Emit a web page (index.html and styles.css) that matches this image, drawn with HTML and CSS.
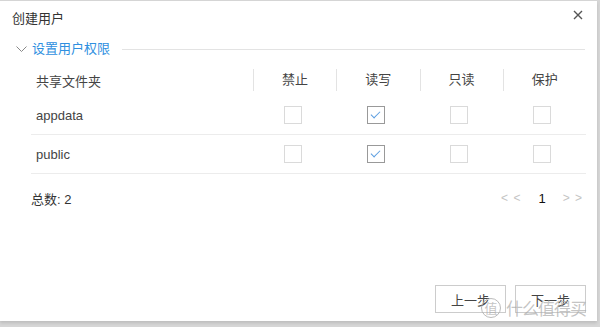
FILE: index.html
```html
<!DOCTYPE html>
<html lang=zh><head>
<meta charset=UTF-8>
<title>创建用户</title><link rel="stylesheet" href="styles.css"></head><body>
<div class=dialog>
<div class=dlg-head><span class=dlg-title>创建用户</span>
<svg class=close width=10 height=10 viewBox="0 0 10 10"><path d="M1 1L9 9M9 1L1 9" stroke="#555" stroke-width="1.4"/></svg></div>
<div class=section>
<svg class=chev width=11 height=6 viewBox="0 0 11 6"><path d="M.5 .5L5.5 5.5L10.5 .5" fill=none stroke="#888" stroke-width="1"/></svg>
<span class=sec-title>设置用户权限</span><span class=sec-line></span></div>
<div class=tbl>
<div class="row head"><div class=c1>共享文件夹</div><div class=c>禁止</div><div class=c>读写</div><div class=c>只读</div><div class=c>保护</div></div>
<div class=row><div class=c1>appdata</div><div class=c><i class=cb></i></div><div class=c><i class="cb on"></i></div><div class=c><i class=cb></i></div><div class=c><i class=cb></i></div></div>
<div class=row><div class=c1>public</div><div class=c><i class=cb></i></div><div class=c><i class="cb on"></i></div><div class=c><i class=cb></i></div><div class=c><i class=cb></i></div></div>
</div>
<div class=foot><span>总数: 2</span><div class=pager><span class=arr>&lt; &lt;</span><span class=pg>1</span><span class=arr>&gt; &gt;</span></div></div>
<div class=btns><button>上一步</button><button>下一步</button></div>
<div class=wm><span class=wm-c>值</span>什么值得买</div>
</div>
</body></html>
```
FILE: styles.css
```css
body{margin:0;background:#d6d6d6;font-family:"Liberation Sans","Noto Sans CJK SC",sans-serif;font-size:13px;color:#333;height:327px;overflow:hidden}
.dialog{position:relative;background:#fff;width:597px;height:320px;margin-top:1px;box-shadow:0 2px 3px rgba(0,0,0,.12)}
.dlg-head{display:flex;justify-content:space-between;align-items:flex-start;padding:11px 14px 0 12px;height:25px}
.dlg-title{font-size:13px;color:#333;line-height:14px}
.close{margin-top:-2px}
.section{display:flex;align-items:center;padding:0 12px 0 16px;height:20px;margin-top:2px}
.chev{margin-right:5px}
.sec-title{color:#2f8fe0;font-size:13px;line-height:14px}
.sec-line{flex:1;height:1px;background:#e3e3e3;margin-left:12px}
.tbl{margin:0 11px 0 31px;padding-top:5px}
.row{display:grid;grid-template-columns:222px repeat(4,1fr);height:38px;align-items:center;border-bottom:1px solid #ececec}
.row.head{height:32px;border:none}
.head .c{border-left:1px solid #e3e3e3;height:22px;line-height:22px;color:#444}
.c1{padding-left:5px;color:#444}
.c{text-align:center;display:flex;justify-content:center;align-items:center}
.cb{display:block;border:1px solid #dadada;box-sizing:border-box;width:18px;height:18px;margin-left:-4px}
.cb.on{border-color:#999;position:relative}
.cb.on::after{content:"";position:absolute;left:5px;top:2px;width:4px;height:8px;border:solid #5c9ee0;border-width:0 1.3px 1.3px 0;transform:rotate(45deg)}
.foot{display:flex;justify-content:space-between;align-items:center;margin:16px 14px 0 31px;height:16px}
.pager{display:flex;align-items:center;gap:17px}
.arr{color:#c4c4c4;font-size:12px;letter-spacing:1px}
.pg{color:#111;font-size:13px}
.btns{display:flex;justify-content:flex-end;gap:9px;margin:79px 11px 0 0}
button{width:71px;height:28px;background:#fff;border:1px solid #ccc;font:13px "Noto Sans CJK SC",sans-serif;color:#444;padding:0}
.wm{position:absolute;left:481px;top:294px;font:17px "Noto Sans CJK SC",sans-serif;color:rgba(170,170,170,.7);display:flex;align-items:center;gap:5px;letter-spacing:-1px}
.wm-c{display:inline-flex;width:18px;height:18px;border:1px solid rgba(170,170,170,.8);border-radius:50%;font-size:13px;align-items:center;justify-content:center;letter-spacing:0}
```
